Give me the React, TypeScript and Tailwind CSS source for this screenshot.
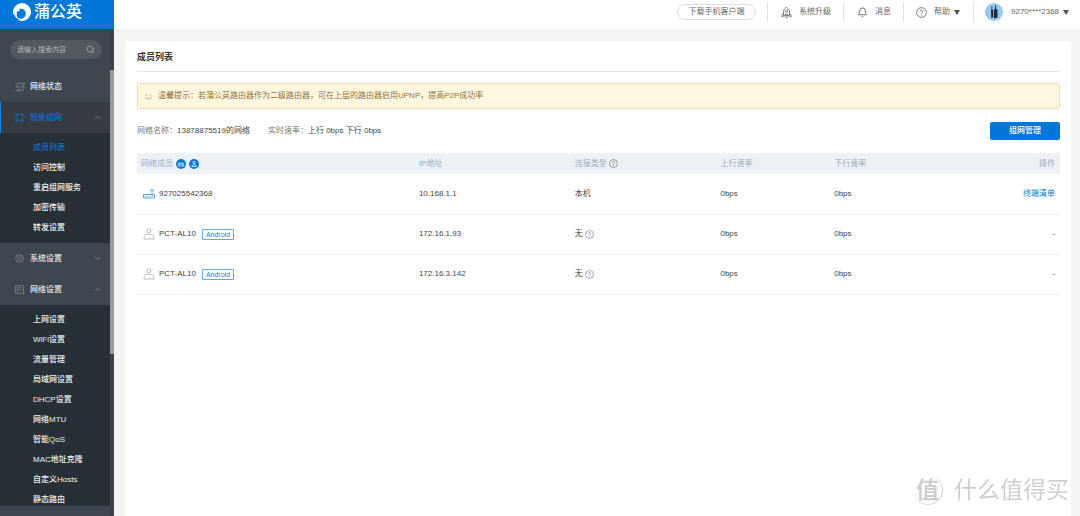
import type { ReactNode } from "react";
import { Bell, ChevronDown, ChevronUp, Search } from "lucide-react";

interface MenuSection {
  label: string;
  icon: ReactNode;
  active?: boolean;
  open?: boolean;
  items?: string[];
}

interface Member {
  name: string;
  ip: string;
  type: string;
  up: string;
  down: string;
  router?: boolean;
}

const iconProps = {
  viewBox: "0 0 20 20",
  fill: "none",
  stroke: "currentColor",
  strokeWidth: 1.6,
  "aria-hidden": true,
};

function StatusIcon() {
  return (
    <svg {...iconProps} className="size-[10px]">
      <path d="M2.500 12A7.700 7.700 0 0 1 15 4M17.500 8A7.700 7.700 0 0 1 5 16" />
      <path d="M1 17.500c3 1 7-2 10-5s7-7 8-10.500c-2-.5-4 .5-6 2M4 8l3 3 4-3" />
    </svg>
  );
}

function MeshIcon() {
  return (
    <svg {...iconProps} className="size-[9px]" strokeWidth={2}>
      <path d="M2 7V2h5l3 2 3-2h5v5l-2 3 2 3v5h-5l-3-2-3 2H2v-5l2-3z" />
      <path d="M3 3l3.500 3.500M17 3l-3.500 3.500M17 17l-3.500-3.500M3 17l3.500-3.500" />
    </svg>
  );
}

function SystemIcon() {
  return (
    <svg {...iconProps} className="size-[9px]">
      <path d="M10 1l3 1.500 3.400.8.8 3.400L19 10l-1.800 3.300-.8 3.400-3.400.8L10 19l-3-1.500-3.400-.8-.8-3.400L1 10l1.800-3.300.8-3.400L7 2.500z" />
      <circle cx="10" cy="10" r="3.500" />
    </svg>
  );
}

function NetworkIcon() {
  return (
    <svg {...iconProps} className="size-[9px]">
      <path d="M1.500 1.500h17v17h-17zM6 6v9M6 6h8M9 10h5" />
    </svg>
  );
}

function RocketIcon() {
  return (
    <svg {...iconProps} className="size-[11px]">
      <path d="M4.500 16V8.500C4.500 5 7 2.500 10 1c3 1.500 5.500 4 5.500 7.500V16zM4.500 12L1.500 15v2.500h3M15.500 12l3 3v2.500h-3M8 19h4" />
      <circle cx="10" cy="8" r="2" />
      <path d="M7.500 16v-2.500h5V16" />
    </svg>
  );
}

function HelpIcon({ className }: { className: string }) {
  return (
    <svg {...iconProps} className={className}>
      <circle cx="10" cy="10" r="8.800" />
      <path d="M7.300 8.200c0-3.600 5.400-3.400 5.400-.3 0 2-2.700 2-2.700 4.200M10 13.600v1.800" />
    </svg>
  );
}

function UserIcon() {
  return (
    <svg {...iconProps} viewBox="0 0 24 24" className="size-3 text-[#aaa]">
      <circle cx="12" cy="5.500" r="4" />
      <path d="M2 22v-3c0-4 3-6 6-6h8c3 0 6 2 6 6v3z" />
    </svg>
  );
}

function RouterIcon() {
  return (
    <svg {...iconProps} viewBox="0 0 24 20" className="h-[10px] w-3 text-[#2f8fe0]">
      <path d="M1 11h22v7H1zM18 11V2M14 2h8" />
      <path d="M4 14.500h3M9 14.500h2M13 14.500h2M17 14.500h3" />
    </svg>
  );
}

function Caret() {
  return (
    <svg viewBox="0 0 6 5" className="h-[5px] w-[6px] fill-[#555]" aria-hidden="true">
      <path d="M0 0h6L3 5z" />
    </svg>
  );
}

function Logo() {
  return (
    <svg viewBox="0 0 36 36" className="size-[18px]" aria-hidden="true">
      <circle cx="18" cy="18" r="18" fill="#fff" />
      <path fill="#0078d9" d="M9 16l4.500 1-1.500-4.500c7-3.500 14 2 13.500 9.500-.4 6-5.500 10-11 9.500-2 0-3.500-.5-4.500-1.500C7 27 6.500 20 9 16z" />
      <path fill="#0078d9" d="M0 24l3-1c1 5 4 8 9 10l-1 3H0z" />
    </svg>
  );
}

const menu: MenuSection[] = [
  { label: "网络状态", icon: <StatusIcon /> },
  {
    label: "智能组网",
    icon: <MeshIcon />,
    active: true,
    open: true,
    items: ["成员列表", "访问控制", "重启组网服务", "加密传输", "转发设置"],
  },
  { label: "系统设置", icon: <SystemIcon />, items: [] },
  {
    label: "网络设置",
    icon: <NetworkIcon />,
    open: true,
    items: [
      "上网设置",
      "WiFi设置",
      "流量管理",
      "局域网设置",
      "DHCP设置",
      "网络MTU",
      "智能QoS",
      "MAC地址克隆",
      "自定义Hosts",
      "静态路由",
    ],
  },
];

const members: Member[] = [
  { name: "927025542368", ip: "10.168.1.1", type: "本机", up: "0bps", down: "0bps", router: true },
  { name: "PCT-AL10", ip: "172.16.1.93", type: "无", up: "0bps", down: "0bps" },
  { name: "PCT-AL10", ip: "172.16.3.142", type: "无", up: "0bps", down: "0bps" },
];

function Sidebar() {
  return (
    <aside className="flex w-[114px] shrink-0 flex-col bg-[#3e4650]">
      <a href="#" className="flex h-[29px] shrink-0 items-start gap-[3px] bg-[#0078d9] pt-[3px] pl-[13px] text-white">
        <Logo />
        <span className="text-[16px] leading-[18px] font-medium">蒲公英</span>
      </a>
      <div className="flex min-h-0 flex-1">
        <div className="mb-[10px] min-w-0 flex-1 overflow-hidden">
          <label className="mt-[11px] mr-2 mb-3 ml-[10px] flex h-[19px] items-center rounded-full bg-[#525961] px-[7px]">
            <input
              type="text"
              aria-label="搜索"
              placeholder="请输入搜索内容"
              className="w-0 flex-1 bg-transparent text-[7px] leading-[10px] outline-none placeholder:text-[#b5b8bc]"
            />
            <Search className="size-[9px] text-[#b0b4b9]" strokeWidth={2} />
          </label>
          <nav>
            {menu.map((section) => (
              <div key={section.label}>
                <button
                  type="button"
                  className={`flex h-[31px] w-full items-center border-l pr-2 pl-[14px] ${
                    section.active
                      ? "border-[#0a84e8] bg-[#363c42] text-[#126cc4]"
                      : "border-transparent text-[#e6e8ea]"
                  }`}
                >
                  <span className={`flex w-[15px] items-center ${section.active ? "" : "text-[#8b9198]"}`}>
                    {section.icon}
                  </span>
                  <span className="flex-1 text-left font-medium">{section.label}</span>
                  {section.items &&
                    (section.open ? (
                      <ChevronUp className="size-[9px] text-[#8a9098]" />
                    ) : (
                      <ChevronDown className="size-[9px] text-[#8a9098]" />
                    ))}
                </button>
                {section.open && (
                  <ul className="bg-[#283037] py-[5px]">
                    {section.items?.map((item) => (
                      <li key={item} className="h-5 pl-[33px]">
                        <a
                          href="#"
                          className={`leading-5 font-medium ${
                            item === "成员列表" ? "text-[#126cc4]" : "text-[#eef0f1]"
                          }`}
                        >
                          {item}
                        </a>
                      </li>
                    ))}
                  </ul>
                )}
              </div>
            ))}
          </nav>
        </div>
        <div className="w-1 bg-[#3a424c] pt-[41px]">
          <div className="h-[284px] bg-[#9c9c9c]" />
        </div>
      </div>
    </aside>
  );
}

function TopBar() {
  return (
    <header className="flex h-[29px] shrink-0 items-start justify-end bg-white pt-[2px] text-[#666]">
      <div className="flex h-5 items-center">
        <button type="button" className="mr-[11px] h-4 w-[79px] rounded-full border border-[#ddd]">
          下载手机客户端
        </button>
        <button type="button" className="flex h-5 w-[76px] items-center gap-[7px] border-l border-[#e2e2e2] pl-[13px]">
          <RocketIcon />
          系统升级
        </button>
        <button type="button" className="flex h-5 w-[60px] items-center gap-[7px] border-l border-[#e2e2e2] pl-[13px]">
          <Bell className="size-[11px]" strokeWidth={2} />
          消息
        </button>
        <button type="button" className="flex h-5 w-[70px] items-center gap-1 border-l border-[#e2e2e2] pl-3">
          <HelpIcon className="mr-[3px] size-[11px]" />
          帮助
          <Caret />
        </button>
        <button type="button" className="flex h-5 w-[107px] items-center border-l border-[#e2e2e2] pl-[11px]">
          <svg viewBox="0 0 36 36" className="mr-2 size-[18px]" aria-hidden="true">
            <circle cx="18" cy="18" r="18" fill="#93c8f2" />
            <path fill="#25282c" d="M12 14l1-1V6h1.500v7l2 1v15l-4 1zM18 13l2-1V5h2v7l3 1v16l-7 2z" />
          </svg>
          <span className="mr-1">9270****2368</span>
          <Caret />
        </button>
      </div>
    </header>
  );
}

function MemberTable() {
  return (
    <table className="mt-[13px] w-full table-fixed text-left">
      <thead>
        <tr className="h-[21px] bg-[#edf1f6] text-[#9aabbd]">
          <th className="w-[30%] pl-1 font-normal">
            <span className="flex items-center">
              网络成员
              <svg viewBox="0 0 20 20" className="ml-[3px] size-[10px]" aria-hidden="true">
                <circle cx="10" cy="10" r="10" fill="#0078d9" />
                <path fill="none" stroke="#fff" strokeWidth="1.500" d="M4.500 10h11v4h-11zM7.500 10V6M12.500 10V6" />
              </svg>
              <svg viewBox="0 0 20 20" className="ml-[3px] size-[10px]" aria-hidden="true">
                <circle cx="10" cy="10" r="10" fill="#0078d9" />
                <circle cx="10" cy="7" r="2.300" fill="none" stroke="#fff" strokeWidth="1.500" />
                <path fill="none" stroke="#fff" strokeWidth="1.500" d="M5.500 15c0-5 9-5 9 0z" />
              </svg>
            </span>
          </th>
          <th className="w-[17%] pl-[5px] font-normal">IP地址</th>
          <th className="w-[16%] pl-1 font-normal">
            <span className="flex items-center gap-[2px]">
              连接类型
              <HelpIcon className="size-[9px] text-[#777]" />
            </span>
          </th>
          <th className="w-[12%] pl-[2px] font-normal">上行速率</th>
          <th className="pl-[5px] font-normal">下行速率</th>
          <th className="w-[12%] pr-[5px] text-right font-normal">操作</th>
        </tr>
      </thead>
      <tbody>
        {members.map((member) => (
          <tr key={member.ip} className="h-10 border-b border-[#eee]">
            <td className="pl-[6px]">
              <span className="flex items-center gap-1">
                {member.router ? <RouterIcon /> : <UserIcon />}
                {member.name}
                {!member.router && (
                  <span className="ml-[2px] rounded-[1px] border border-[#5fa9e8] px-[3px] text-[7px] leading-[9px] text-[#1b7fd8]">
                    Android
                  </span>
                )}
              </span>
            </td>
            <td className="pl-[5px]">{member.ip}</td>
            <td className="pl-1">
              <span className="flex items-center gap-[2px]">
                {member.type}
                {!member.router && <HelpIcon className="size-[9px] text-[#888]" />}
              </span>
            </td>
            <td className="pl-[2px]">{member.up}</td>
            <td className="pl-[5px]">{member.down}</td>
            <td className="pr-[5px] text-right">
              {member.router ? (
                <a href="#" className="text-[#0078d9]">
                  终端清单
                </a>
              ) : (
                "-"
              )}
            </td>
          </tr>
        ))}
      </tbody>
    </table>
  );
}

export default function App() {
  return (
    <div className="flex h-screen overflow-hidden bg-[#f4f4f4] font-['Liberation_Sans','Noto_Sans_CJK_SC',sans-serif] text-[8px] leading-3 text-[#444]">
      <Sidebar />
      <div className="flex min-w-0 flex-1 flex-col">
        <TopBar />
        <main className="mt-3 mr-[9px] ml-[11px] flex-1 bg-white pr-[11px] pl-3">
          <h1 className="border-b border-[#e6e6e6] pt-[10px] pb-2 text-[9px] leading-3 font-bold text-[#333]">
            成员列表
          </h1>
          <p className="mt-[11px] flex h-[26px] items-center gap-[6px] rounded-[2px] border border-[#f0e0a8] bg-[#fdf7e0] px-[7px] text-[#95713a]">
            <svg viewBox="0 0 14 14" className="size-[7px] fill-none stroke-[#d9a441]" strokeWidth="2" aria-hidden="true">
              <path d="M3 2v3M11 2v3M1 8c2 5 10 5 12 0" />
            </svg>
            温馨提示：若蒲公英路由器作为二级路由器，可在上层的路由器启用UPNP，提高P2P成功率
          </p>
          <div className="mt-[13px] flex items-center">
            <p className="mr-[18px]">
              <span className="text-[#777]">网络名称：</span>13878875519的网络
            </p>
            <p>
              <span className="text-[#777]">实时速率：</span>上行 0bps 下行 0bps
            </p>
            <button
              type="button"
              className="ml-auto h-[18px] w-[70px] rounded-[2px] bg-[#0078d9] font-medium text-white"
            >
              组网管理
            </button>
          </div>
          <MemberTable />
        </main>
      </div>
      <div className="pointer-events-none fixed right-[11px] bottom-[11px] flex items-center gap-[11px] text-[#cfcfcf]">
        <span className="flex size-[30px] items-center justify-center rounded-full border-r border-b border-[#d4d4d4] text-[23px] leading-[30px] font-bold">
          值
        </span>
        <span className="text-[23px] leading-[30px]">什么值得买</span>
      </div>
    </div>
  );
}
